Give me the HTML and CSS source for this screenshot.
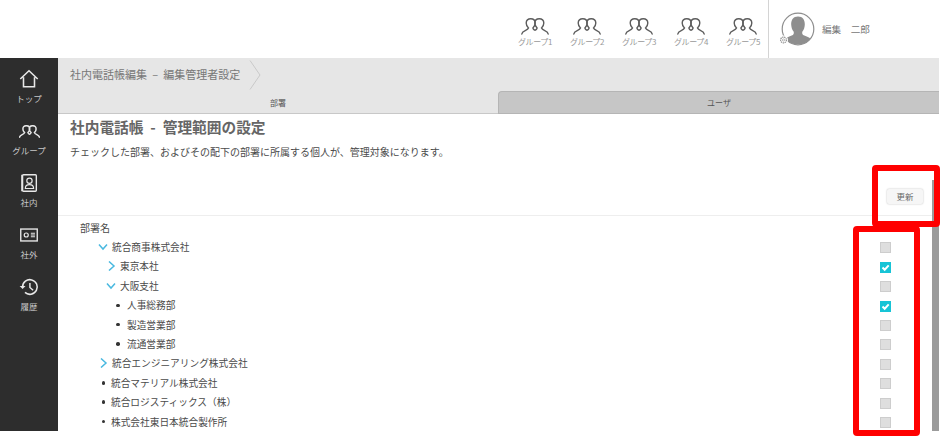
FILE: index.html
```html
<!DOCTYPE html>
<html lang="ja">
<head>
<meta charset="utf-8">
<title>社内電話帳 - 管理範囲の設定</title>
<link rel="stylesheet" href="styles.css">
</head>
<body>
<svg class="defs" width="0" height="0" aria-hidden="true">
  <symbol id="i-group" viewBox="0 0 28 17">
    <path d="M.8 16C1.200 12.500 6.500 13 7.500 10 5.800 8.500 5.200 6.500 5.200 5 5.200 2.300 7 .8 9.700.8S14.200 2.300 14.200 5C14.200 6.500 13.600 8.500 11.900 10 12.200 11 12.800 11.600 13.600 12.100" fill="none" stroke="currentColor" stroke-linecap="round"/>
    <path d="M27.200 16C26.800 12.500 21.500 13 20.500 10 22.200 8.500 22.800 6.500 22.800 5 22.800 2.300 21 .8 18.300.8S13.800 2.300 13.800 5C13.800 6.500 14.400 8.500 16.100 10 15.800 11 15.200 11.600 14.400 12.100" fill="none" stroke="currentColor" stroke-linecap="round"/>
  </symbol>
</svg>

<div class="app">
  <header class="topbar">
    <nav class="groups">
      <a class="group"><svg class="group-icon"><use href="#i-group"/></svg><span>グループ1</span></a>
      <a class="group"><svg class="group-icon"><use href="#i-group"/></svg><span>グループ2</span></a>
      <a class="group"><svg class="group-icon"><use href="#i-group"/></svg><span>グループ3</span></a>
      <a class="group"><svg class="group-icon"><use href="#i-group"/></svg><span>グループ4</span></a>
      <a class="group"><svg class="group-icon"><use href="#i-group"/></svg><span>グループ5</span></a>
    </nav>
    <div class="user">
      <svg class="avatar" viewBox="0 0 40 40">
        <circle cx="20" cy="19" r="15.800" fill="#fff" stroke="#8e8e8e" stroke-width="1.200"/>
        <path d="M20 6.500c4.700 0 7 3.500 6.800 8.200-.2 3-1 5.300-2.500 7-.4 2 0 3 2 3.800 2.500 1 5 1.700 6.200 3.300A15 15 0 0 1 20 34.300 15 15 0 0 1 7.500 28.800c1.200-1.600 3.700-2.300 6.200-3.300 2-.8 2.400-1.800 2-3.800-1.500-1.700-2.300-4-2.500-7C13 10 15.300 6.500 20 6.500z" fill="#8e8e8e"/>
        <circle cx="5.500" cy="30" r="4.500" fill="#fff"/>
        <circle cx="5.500" cy="30" r="2.900" fill="none" stroke="#8e8e8e" stroke-width="1.200" stroke-dasharray="1.300 .7"/>
        <circle cx="5.500" cy="30" r="1.100" fill="none" stroke="#8e8e8e" stroke-width=".6"/>
      </svg>
      <span class="user-name">編集　二郎</span>
    </div>
  </header>

  <div class="body">
    <aside class="sidebar">
      <a class="side-item">
        <svg class="side-icon" viewBox="0 0 24 24"><path d="M2.500 12 12 3l9.500 9M6 10v10.500h12V10" fill="none" stroke="currentColor" stroke-width="1.700"/></svg>
        <span>トップ</span>
      </a>
      <a class="side-item">
        <svg class="side-icon side-icon-wide"><use href="#i-group"/></svg>
        <span>グループ</span>
      </a>
      <a class="side-item">
        <svg class="side-icon" viewBox="0 0 24 24"><rect x="5" y="3" width="15" height="18" rx="1" fill="none" stroke="currentColor" stroke-width="1.500"/><rect x="3.500" y="3" width="1.500" height="18" fill="currentColor"/><circle cx="12.500" cy="9.500" r="2.900" fill="none" stroke="currentColor" stroke-width="1.300"/><path d="M8 18c0-3.800 2.500-4.200 4.500-4.200s4.500.4 4.500 4.200z" fill="none" stroke="currentColor" stroke-width="1.300"/></svg>
        <span>社内</span>
      </a>
      <a class="side-item">
        <svg class="side-icon" viewBox="0 0 24 24"><rect x="3" y="5.500" width="18" height="13" fill="none" stroke="currentColor" stroke-width="1.500"/><circle cx="9" cy="12" r="2.200" fill="none" stroke="currentColor" stroke-width="1.300"/><path d="M14 10h4.500M14 12h4.500M14 14h4.500" stroke="currentColor" stroke-width="1.100"/></svg>
        <span>社外</span>
      </a>
      <a class="side-item">
        <svg class="side-icon" viewBox="0 0 24 24"><path d="M5 12a8 8 0 1 1 2.600 5.900" fill="none" stroke="currentColor" stroke-width="1.700"/><path d="m1.800 10.800 3.200 3.400 3.200-3.400z" fill="currentColor"/><path d="M13 7.500V12.500l3.500 3" fill="none" stroke="currentColor" stroke-width="1.600"/></svg>
        <span>履歴</span>
      </a>
    </aside>

    <main class="main">
      <div class="crumbs">
        <span class="crumb">社内電話帳編集 – 編集管理者設定</span>
        <svg class="crumb-arrow" viewBox="0 0 12 30"><path d="M1 .5 11 15 1 29.500" fill="none" stroke="#c9c9c9"/></svg>
      </div>
      <div class="tabs">
        <div class="tab tab-active">部署</div>
        <div class="tab tab-other">ユーザ</div>
      </div>
      <div class="head">
        <h1 class="title">社内電話帳 - 管理範囲の設定</h1>
        <p class="lead">チェックした部署、およびその配下の部署に所属する個人が、管理対象になります。</p>
        <div class="actions"><button class="btn" type="button">更新</button></div>
      </div>
      <div class="tree">
        <div class="row row-head">部署名</div>
        <div class="row l0"><svg class="chev"><path d="M1 2.500 5 7l4-4.500"/></svg><span class="name">統合商事株式会社</span><i class="check"></i></div>
        <div class="row l1"><svg class="chev"><path d="M3 .5 8 5l-5 4.500"/></svg><span class="name">東京本社</span><i class="check on"><svg viewBox="0 0 11 11"><path d="m2.500 5.500 2.200 2.200 4-4.300"/></svg></i></div>
        <div class="row l1"><svg class="chev"><path d="M1 2.500 5 7l4-4.500"/></svg><span class="name">大阪支社</span><i class="check"></i></div>
        <div class="row l2"><b class="dot"></b><span class="name">人事総務部</span><i class="check on"><svg viewBox="0 0 11 11"><path d="m2.500 5.500 2.200 2.200 4-4.300"/></svg></i></div>
        <div class="row l2"><b class="dot"></b><span class="name">製造営業部</span><i class="check"></i></div>
        <div class="row l2"><b class="dot"></b><span class="name">流通営業部</span><i class="check"></i></div>
        <div class="row l0"><svg class="chev"><path d="M3 .5 8 5l-5 4.500"/></svg><span class="name">統合エンジニアリング株式会社</span><i class="check"></i></div>
        <div class="row l0"><b class="dot"></b><span class="name">統合マテリアル株式会社</span><i class="check"></i></div>
        <div class="row l0"><b class="dot"></b><span class="name">統合ロジスティックス（株）</span><i class="check"></i></div>
        <div class="row l0"><b class="dot"></b><span class="name">株式会社東日本統合製作所</span><i class="check"></i></div>
      </div>
      <div class="scrollbar"></div>
    </main>
  </div>
</div>

<div class="mark mark-btn"></div>
<div class="mark mark-checks"></div>
</body>
</html>
```

FILE: styles.css
```css
* { box-sizing: border-box; }
html, body { margin: 0; padding: 0; background: #fff; }
body {
  position: relative;
  height: 436px;
  overflow: hidden;
  font-family: "Noto Sans CJK JP", "Noto Sans", sans-serif;
  font-size: 10px;
  color: #4a4a4a;
}
.defs { position: absolute; }
.app { width: 939px; height: 431px; display: flex; flex-direction: column; }

/* top bar */
.topbar { height: 58px; flex: none; display: flex; justify-content: flex-end; background: #fff; }
.groups { display: flex; margin-right: -1px; }
.group { width: 52px; display: flex; flex-direction: column; align-items: center; padding-top: 18px; color: #777; }
.group-icon { width: 28px; height: 17px; color: #5c5c5c; stroke-width: 1.400; }
.group span { font-size: 8px; line-height: 12px; margin-top: 1px; letter-spacing: -.4px; color: #999; white-space: nowrap; }
.user { width: 171px; border-left: 1px solid #d4d4d4; display: flex; align-items: center; padding-left: 9px; position: relative; background: #fff; }
.avatar { width: 40px; height: 40px; flex: none; margin-top: 2px; }
.user-name { margin-left: 4px; color: #777; font-size: 9.600px; margin-top: -1px; }

/* layout */
.body { flex: 1; display: flex; min-height: 0; }
.sidebar { width: 58px; flex: none; background: #2d2d2d; display: flex; flex-direction: column; align-items: center; padding-top: 10px; }
.side-item { height: 52px; display: flex; flex-direction: column; align-items: center; color: #e8e8e8; }
.side-icon { width: 22px; height: 22px; flex: none; }
.side-icon-wide { width: 21px; height: 13px; margin: 5px 0 4px; stroke-width: 2; }
.side-item span { font-size: 8.500px; line-height: 12px; margin-top: 2px; color: #c8c8c8; white-space: nowrap; }

.main { flex: 1; min-width: 0; display: flex; flex-direction: column; position: relative; overflow: hidden; }

/* breadcrumb */
.crumbs { height: 33px; flex: none; background: #e6e6e6; display: flex; align-items: center; padding: 0 0 0 12px; }
.crumb { font-size: 11px; word-spacing: 2.700px; color: #777; margin-top: -1px; white-space: nowrap; }
.crumb-arrow { width: 12px; height: 30px; margin: 0 0 0 9px; }

/* tabs */
.tabs { height: 23px; flex: none; display: flex; background: #e6e6e6; }
.tab { font-size: 8px; line-height: 24px; text-align: center; color: #555; }
.tab-active { width: 440px; border-bottom: 1px solid #c8c8c8; }
.tab-other { flex: 1; background: #c6c6c6; border-top: 1px solid #b5b5b5; border-left: 1px solid #b5b5b5; border-bottom: 1px solid #b5b5b5; border-top-left-radius: 4px; line-height: 22px; }

/* heading */
.head { height: 102px; flex: none; padding: 0 0 0 12px; border-bottom: 1px solid #eee; margin-right: 7px; display: flex; flex-direction: column; }
.title { margin: 2px 0 0; font-size: 14.700px; word-spacing: 3.600px; line-height: 22px; font-weight: 700; color: #666; white-space: nowrap; }
.lead { margin: 7px 0 0; font-size: 10px; line-height: 14px; white-space: nowrap; }
.actions { display: flex; justify-content: flex-end; margin-top: 30px; padding-right: 9px; }
.btn { width: 36px; height: 15px; padding: 0; border: 0; border-radius: 2px; background: #f6f6f6; box-shadow: 0 0 2px #bbb; font: inherit; font-size: 8.500px; line-height: 15px; color: #666; }

/* tree */
.tree { flex: 1; min-height: 0; margin-right: 7px; padding-top: 2px; }
.row { height: 19.400px; display: flex; align-items: center; position: relative; white-space: nowrap; }
.row-head { padding-left: 22px; }
.name { font-size: 9.700px; }
.l0 { padding-left: 41px; }
.l1 { padding-left: 48px; }
.l2 { padding-left: 57px; }
.chev { width: 10px; height: 10px; margin-right: 4px; margin-left: -1px; fill: none; stroke: #4ab9e0; stroke-width: 1.500; flex: none; }
.l1 .chev { margin-left: 0; }
.dot { width: 3.500px; height: 3.500px; border-radius: 50%; background: #333; flex: none; margin-right: 7.500px; margin-left: 1px; }
.l0 .dot { margin-left: 2.500px; margin-right: 6px; }
.check { position: absolute; left: 822px; top: 5px; width: 11px; height: 11px; background: #dedede; border: 1px solid #cdcdcd; }
.check.on { background: #17c4d6; border-color: #17c4d6; }
.check svg { display: block; width: 11px; height: 11px; margin: -1px; fill: none; stroke: #fff; stroke-width: 2; }

/* overlays */
.scrollbar { position: absolute; top: 122px; right: 0; bottom: 0; width: 7px; background: #9b9b9b; }
.mark { position: absolute; border: 6px solid #f00; border-radius: 4px; }
.mark-btn { left: 872px; top: 165px; width: 68px; height: 62px; }
.mark-checks { left: 853px; top: 226px; width: 67px; height: 210px; }
```
